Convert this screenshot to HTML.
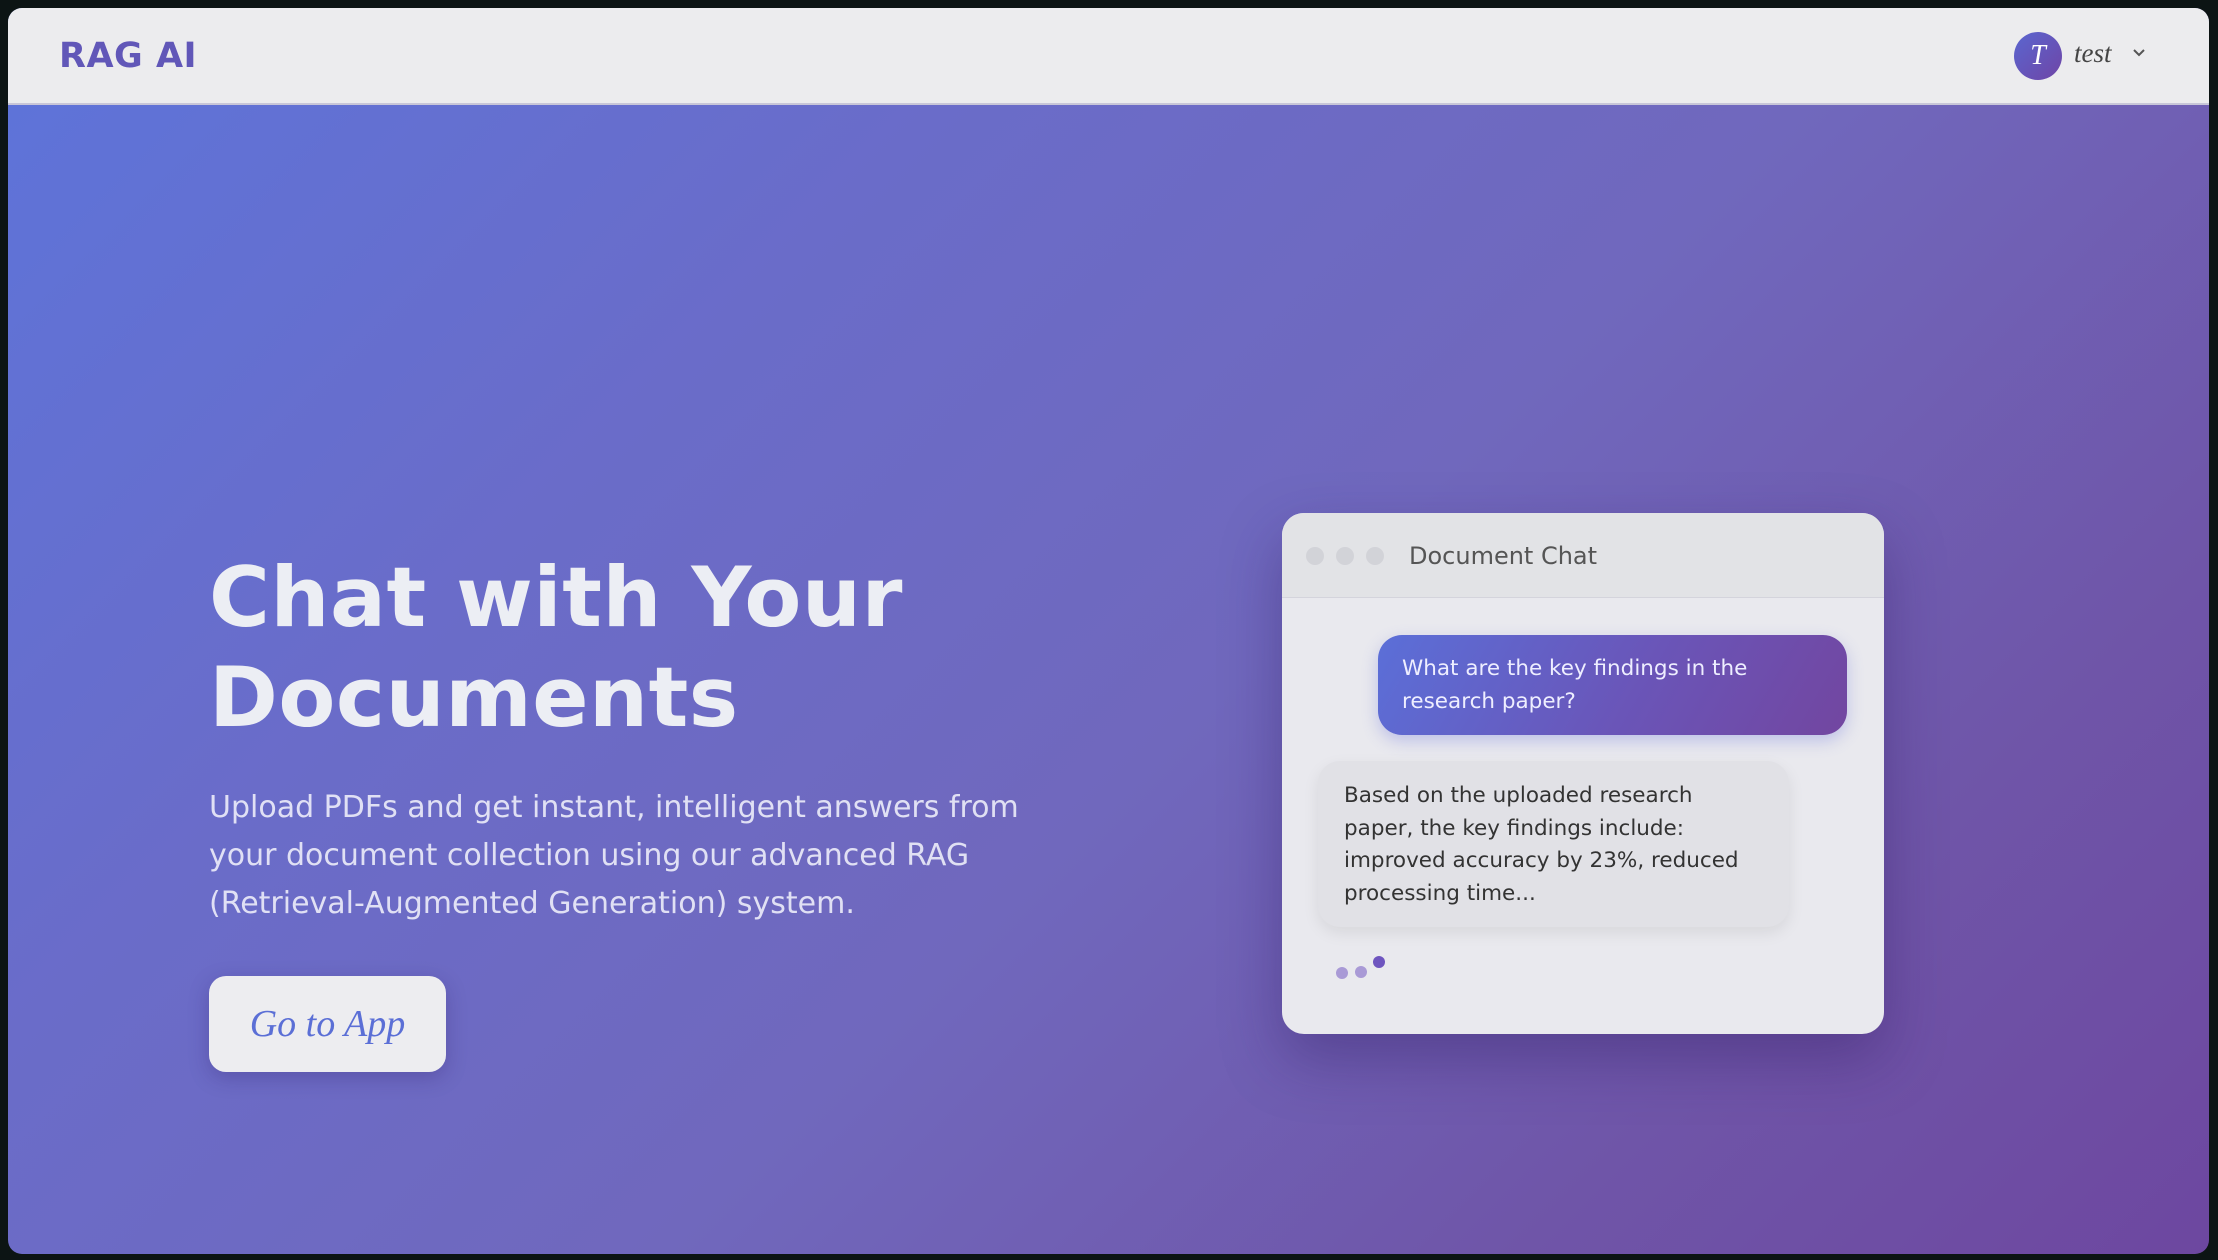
<!DOCTYPE html>
<html><head><meta charset="utf-8">
<style>
*{margin:0;padding:0;box-sizing:border-box}
html,body{width:2218px;height:1260px;overflow:hidden;background:#0c1414}
body{font-family:"DejaVu Sans","Liberation Sans",sans-serif}
.page{position:absolute;left:8px;top:8px;width:2201px;height:1246px;border-radius:14px;overflow:hidden;
background:linear-gradient(135deg,#5d74da 0%,#6a6cc9 30%,#7068bd 55%,#6f55a8 80%,#6d47a0 100%)}
.hdr{position:absolute;left:0;top:0;width:100%;height:97px;background:#ececee;border-bottom:2px solid #c8c6d8}
.logo{position:absolute;left:51px;top:28px;font-weight:bold;font-size:35px;color:#6157b8;letter-spacing:0.5px}
.av{position:absolute;left:2006px;top:24px;width:48px;height:48px;border-radius:50%;background:linear-gradient(135deg,#5a66d0,#6f45a6);color:#fff;font:italic 28px "Liberation Serif",serif;text-align:center;line-height:48px}
.uname{position:absolute;left:2066px;top:30px;font:italic 27px "Liberation Serif",serif;color:#444}
.chev{position:absolute;left:2124px;top:40px}
h1{position:absolute;left:201px;top:540px;font-size:83px;line-height:100px;font-weight:bold;color:#eceef4;letter-spacing:0.5px}
.p{position:absolute;left:201px;top:776px;width:880px;font-size:30px;line-height:48px;color:rgba(240,240,250,0.88)}
.btn{position:absolute;left:201px;top:968px;width:237px;height:96px;border-radius:17px;background:#ededf0;box-shadow:0 6px 20px rgba(40,20,90,.25);color:#5b6fd6;font:italic 38px "Liberation Serif",serif;text-align:center;line-height:96px}
.card{position:absolute;left:1274px;top:505px;width:602px;height:521px;border-radius:22px;background:#e9e9ee;box-shadow:0 25px 60px rgba(40,20,90,.35);overflow:hidden}
.ch{height:85px;background:#e2e3e6;border-bottom:1px solid #d4d4dc;position:relative}
.d{position:absolute;top:34px;width:18px;height:18px;border-radius:50%;background:#d2d3d8}
.ct{position:absolute;left:127px;top:29px;font-size:24px;color:#555}
.ub{position:absolute;left:96px;top:122px;width:469px;height:100px;border-radius:24px;background:linear-gradient(120deg,#5b6fd8,#6a55b8 55%,#7246a0);box-shadow:0 6px 16px rgba(90,100,220,.3);color:#eef;font-size:21.5px;line-height:33px;padding:17px 24px}
.bb{position:absolute;left:36px;top:248px;width:471px;height:166px;border-radius:22px;background:#e1e1e6;box-shadow:0 6px 16px rgba(0,0,0,.08);color:#333;font-size:21.5px;line-height:32.6px;padding:19px 26px}
.t{position:absolute;width:12px;height:12px;border-radius:50%}
</style></head><body>
<div class="page">
<div class="hdr">
<div class="logo">RAG AI</div>
<div class="av">T</div>
<div class="uname">test</div>
<svg class="chev" width="14" height="10" viewBox="0 0 14 10"><path d="M2 2l5 5 5-5" fill="none" stroke="#555" stroke-width="2"/></svg>
</div>
<h1>Chat with Your<br>Documents</h1>
<div class="p">Upload PDFs and get instant, intelligent answers from your document collection using our advanced RAG (Retrieval-Augmented Generation) system.</div>
<div class="btn">Go to App</div>
<div class="card">
<div class="ch"><div class="d" style="left:24px"></div><div class="d" style="left:54px"></div><div class="d" style="left:84px"></div><div class="ct">Document Chat</div></div>
<div class="ub">What are the key findings in the research paper?</div>
<div class="bb">Based on the uploaded research paper, the key findings include: improved accuracy by 23%, reduced processing time...</div>
<div class="t" style="left:54px;top:454px;background:#a99ad6"></div>
<div class="t" style="left:73px;top:453px;background:#a99ad6"></div>
<div class="t" style="left:91px;top:443px;background:#6e55bf"></div>
</div>
</div>
</body></html>
